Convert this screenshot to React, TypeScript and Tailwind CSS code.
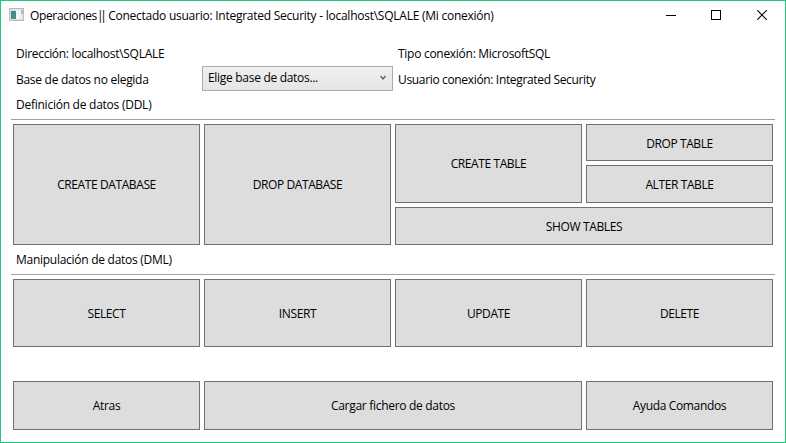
import type { ReactNode } from "react";

type TextProps = { children: ReactNode; className?: string };

function Label({ children, className = "" }: TextProps) {
  return <span className={`block whitespace-nowrap leading-4 ${className}`}>{children}</span>;
}

function Button({ children, className = "" }: TextProps) {
  return (
    <button
      type="button"
      className={`flex items-center justify-center whitespace-nowrap border border-[#707070] bg-[#dddddd] leading-4 ${className}`}
    >
      {children}
    </button>
  );
}

function AppIcon() {
  return (
    <svg width="16" height="14" viewBox="0 0 16 14" shapeRendering="crispEdges">
      <defs>
        <linearGradient id="pane" x1="0" y1="0" x2="1" y2="1">
          <stop offset="0" stopColor="#4a7fa8" />
          <stop offset="1" stopColor="#3f9a70" />
        </linearGradient>
      </defs>
      <rect x="0.5" y="0.5" width="14" height="12" fill="#dfe1e6" stroke="#b9bbc1" />
      <rect x="2" y="3" width="5" height="8" fill="url(#pane)" />
      <rect x="7" y="2" width="5" height="9" fill="#f4f5f8" />
      <rect x="12" y="2" width="2" height="4" fill="#9cc4b4" />
      <rect x="12" y="6" width="2" height="5" fill="#e4eaf0" />
    </svg>
  );
}

function TitleBar() {
  return (
    <header className="flex h-[30px] items-start">
      <div className="ml-2 mt-[7px]">
        <AppIcon />
      </div>
      <div className="ml-[5px] mt-[7px] flex">
        <Label className="tracking-[-0.35px]">Operaciones</Label>
        <Label className="tracking-[-3.2px]">||</Label>
        <Label className="ml-[4.4px] tracking-[-0.25px]">
          Conectado usuario: Integrated Security - localhost\SQLALE (Mi conexión)
        </Label>
      </div>
      <div className="ml-auto mr-[17px] mt-[9px] flex">
        <svg className="mr-[35px]" width="10" height="10" shapeRendering="crispEdges">
          <path d="M0 5.5H10" stroke="#000" />
        </svg>
        <svg className="mr-[36px]" width="10" height="10" shapeRendering="crispEdges">
          <rect x="0.5" y="0.5" width="9" height="9" fill="none" stroke="#000" />
        </svg>
        <svg width="11" height="10">
          <path d="M0.2 0.2L9.8 9.8M9.8 0.2L0.2 9.8" stroke="#000" strokeWidth="1.1" />
        </svg>
      </div>
    </header>
  );
}

export default function App() {
  return (
    <div className="flex h-[443px] w-[786px] flex-col border border-[#1ec878] bg-white font-['Open_Sans','Noto_Sans',sans-serif] text-[12px] text-black">
      <TitleBar />
      <main className="mx-[10px] flex flex-col">
        <section className="grid h-[63px] grid-cols-[191px_191px_1fr] grid-rows-[32px_31px]">
          <Label className="ml-[5px] mt-[15px] tracking-[-0.29px]">Dirección: localhost\SQLALE</Label>
          <span />
          <Label className="ml-[5px] mt-[15px] tracking-[-0.28px]">Tipo conexión: MicrosoftSQL</Label>
          <Label className="ml-[5px] mt-[9px] tracking-[-0.28px]">Base de datos no elegida</Label>
          <div className="mt-[3px] flex h-[25px] w-[191px] justify-between border border-[#acacac] bg-linear-to-b from-[#f0f0f0] to-[#e5e5e5]">
            <Label className="ml-[5px] mt-[3px] tracking-[-0.3px]">Elige base de datos...</Label>
            <svg className="mr-[6px] mt-[8px]" width="6" height="6" viewBox="0 0 6 6">
              <path d="M0.6 1L3 4L5.4 1" fill="none" stroke="#606060" strokeWidth="1.4" />
            </svg>
          </div>
          <Label className="ml-[5px] mt-[9px] tracking-[-0.34px]">Usuario conexión: Integrated Security</Label>
        </section>

        <section className="flex flex-col">
          <div className="h-[26px] border-b border-[#a0a0a0] pl-[5px] pt-[3px]">
            <Label className="tracking-[-0.25px]">Definición de datos (DDL)</Label>
          </div>
          <div className="ml-[2px] mt-1 grid h-[121px] grid-cols-[187px_187px_187px_187px] grid-rows-[37px_38px_38px] gap-1">
            <Button className="row-span-3 tracking-[-0.4px]">CREATE DATABASE</Button>
            <Button className="row-span-3 tracking-[-0.4px]">DROP DATABASE</Button>
            <Button className="row-span-2 tracking-[-0.4px]">CREATE TABLE</Button>
            <Button className="pt-[2px] tracking-[-0.4px]">DROP TABLE</Button>
            <Button className="pt-[2px] tracking-[-0.4px]">ALTER TABLE</Button>
            <Button className="col-span-2 pt-[2px] tracking-[-0.35px]">SHOW TABLES</Button>
          </div>
        </section>

        <section className="flex flex-col">
          <div className="h-[30px] border-b border-[#a0a0a0] pl-[5px] pt-[7px]">
            <Label className="tracking-[-0.27px]">Manipulación de datos (DML)</Label>
          </div>
          <div className="ml-[2px] mt-1 grid h-[68px] grid-cols-[187px_187px_187px_187px] gap-1">
            <Button className="pt-[2px] tracking-[-0.4px]">SELECT</Button>
            <Button className="pt-[2px] tracking-[-0.4px]">INSERT</Button>
            <Button className="pt-[2px] tracking-[-0.4px]">UPDATE</Button>
            <Button className="pt-[2px] tracking-[-0.4px]">DELETE</Button>
          </div>
        </section>

        <footer className="ml-[2px] mt-[34px] grid h-[49px] grid-cols-[187px_378px_187px] gap-1">
          <Button className="tracking-[-0.3px]">Atras</Button>
          <Button className="tracking-[-0.3px]">Cargar fichero de datos</Button>
          <Button className="tracking-[-0.35px]">Ayuda Comandos</Button>
        </footer>
      </main>
    </div>
  );
}
